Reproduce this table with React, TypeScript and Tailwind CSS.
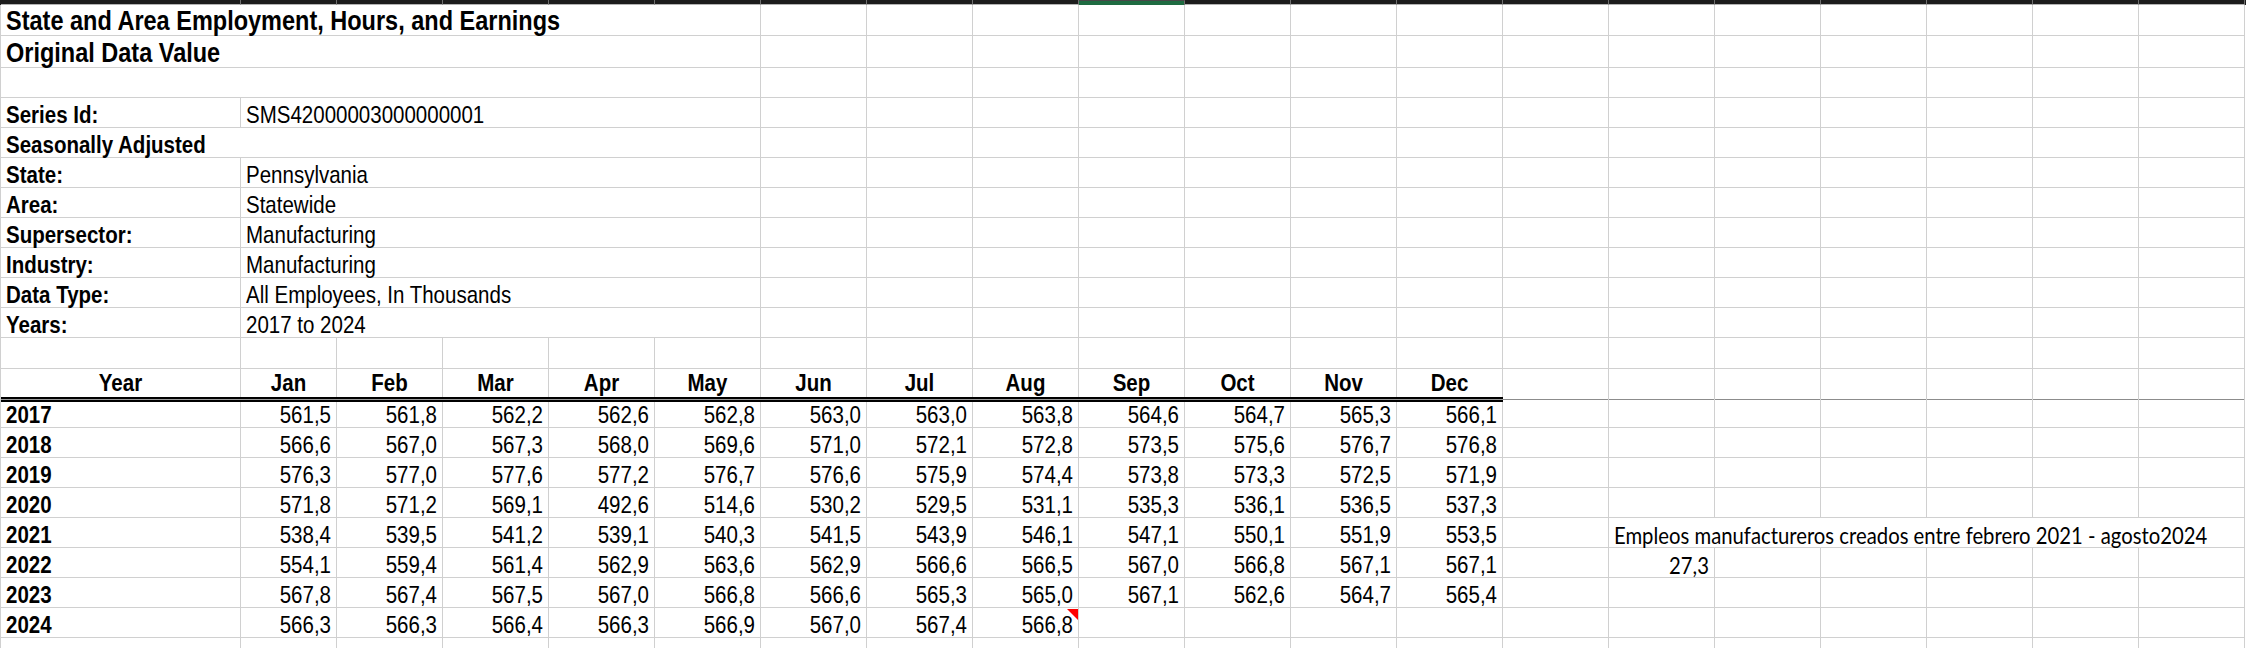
import React from 'react';

const GRID = 'grid grid-cols-[240px_96px_repeat(18,106px)]';
const IDX = Array.from({ length: 20 }, (_, i) => i);
const MONTHS = ['Jan', 'Feb', 'Mar', 'Apr', 'May', 'Jun', 'Jul', 'Aug', 'Sep', 'Oct', 'Nov', 'Dec'];

const DATA: [string, string[]][] = [
  ['2017', ['561,5', '561,8', '562,2', '562,6', '562,8', '563,0', '563,0', '563,8', '564,6', '564,7', '565,3', '566,1']],
  ['2018', ['566,6', '567,0', '567,3', '568,0', '569,6', '571,0', '572,1', '572,8', '573,5', '575,6', '576,7', '576,8']],
  ['2019', ['576,3', '577,0', '577,6', '577,2', '576,7', '576,6', '575,9', '574,4', '573,8', '573,3', '572,5', '571,9']],
  ['2020', ['571,8', '571,2', '569,1', '492,6', '514,6', '530,2', '529,5', '531,1', '535,3', '536,1', '536,5', '537,3']],
  ['2021', ['538,4', '539,5', '541,2', '539,1', '540,3', '541,5', '543,9', '546,1', '547,1', '550,1', '551,9', '553,5']],
  ['2022', ['554,1', '559,4', '561,4', '562,9', '563,6', '562,9', '566,6', '566,5', '567,0', '566,8', '567,1', '567,1']],
  ['2023', ['567,8', '567,4', '567,5', '567,0', '566,8', '566,6', '565,3', '565,0', '567,1', '562,6', '564,7', '565,4']],
  ['2024', ['566,3', '566,3', '566,4', '566,3', '566,9', '567,0', '567,4', '566,8']],
];

const META: [string, string][] = [
  ['State:', 'Pennsylvania'],
  ['Area:', 'Statewide'],
  ['Supersector:', 'Manufacturing'],
  ['Industry:', 'Manufacturing'],
  ['Data Type:', 'All Employees, In Thousands'],
  ['Years:', '2017 to 2024'],
];

type CellProps = {
  children?: React.ReactNode;
  noRight?: boolean;
  noBottom?: boolean;
  align?: 'left' | 'right' | 'center';
  className?: string;
};

function Cell({ children, noRight, noBottom, align = 'left', className = '' }: CellProps) {
  const a =
    align === 'right' ? 'justify-end pr-[5px]' : align === 'center' ? 'justify-center' : 'justify-start pl-[5px]';
  return (
    <div
      className={`flex min-w-0 items-end whitespace-nowrap border-[#d0d0d0] ${noRight ? '' : 'border-r'} ${
        noBottom ? '' : 'border-b'
      } ${a} ${className}`}
    >
      {children}
    </div>
  );
}

// the sheet capture is a little taller than it is wide, so glyphs get stretched vertically
const T = ({ children, bold }: { children: React.ReactNode; bold?: boolean }) => (
  <span className={`inline-block scale-y-[1.15] text-[20.5px] leading-[24px] ${bold ? 'font-bold' : ''}`}>
    {children}
  </span>
);

const Title = ({ children }: { children: React.ReactNode }) => (
  <span className="inline-block scale-y-[1.15] text-[23.5px] leading-[27px] font-bold">{children}</span>
);

const Note = ({ children }: { children: React.ReactNode }) => (
  <span className="inline-block scale-y-[1.1] font-['Lato',sans-serif] text-[20.3px] leading-[24px]">{children}</span>
);

// rows 1-11: columns A-F carry no inner vertical lines, only A|B on label rows
function TopRow({
  h,
  a,
  b,
  aLine,
}: {
  h: string;
  a?: React.ReactNode;
  b?: React.ReactNode;
  aLine?: boolean;
}) {
  return (
    <div className={`${GRID} ${h}`}>
      {IDX.map((i) => (
        <Cell key={i} noRight={i < 5 && !(i === 0 && aLine)}>
          {i === 0 ? a : i === 1 ? b : null}
        </Cell>
      ))}
    </div>
  );
}

export default function App() {
  return (
    <div className="h-[648px] w-[2246px] overflow-hidden bg-white font-['Liberation_Sans',Arial,sans-serif] text-black">
      {/* cut-off column header strip */}
      <div className={`${GRID} h-[5px] bg-[#1c1c1c] pl-[1px]`}>
        {IDX.map((i) =>
          i === 9 ? (
            <div key={i} className="border-t border-r border-t-[#474747] border-r-[#6e6e6e] bg-[#1e6b41]" />
          ) : (
            <div key={i} className="border-r border-b border-r-[#6e6e6e] border-b-[#b3b3b3]" />
          )
        )}
      </div>

      <div className="border-l border-[#d0d0d0]">
        <TopRow h="h-[31px]" a={<Title>State and Area Employment, Hours, and Earnings</Title>} />
        <TopRow h="h-[32px]" a={<Title>Original Data Value</Title>} />
        <TopRow h="h-[30px]" />
        <TopRow h="h-[30px]" aLine a={<T bold>Series Id:</T>} b={<T>SMS42000003000000001</T>} />
        <TopRow h="h-[30px]" a={<T bold>Seasonally Adjusted</T>} />
        {META.map(([k, v]) => (
          <TopRow key={k} h="h-[30px]" aLine a={<T bold>{k}</T>} b={<T>{v}</T>} />
        ))}

        <div className={`${GRID} h-[31px]`}>
          {IDX.map((i) => (
            <Cell key={i} />
          ))}
        </div>

        {/* header */}
        <div className={`${GRID} h-[28px]`}>
          {IDX.map((i) => (
            <Cell key={i} noBottom align="center" className="pb-[2px]">
              {i === 0 ? <T bold>Year</T> : i <= 12 ? <T bold>{MONTHS[i - 1]}</T> : null}
            </Cell>
          ))}
        </div>

        {/* double rule under header */}
        <div className={`${GRID} h-[5px]`}>
          {IDX.map((i) =>
            i <= 12 ? (
              <div key={i} className="flex flex-col">
                <div className="h-[2px] bg-black" />
                <div className="h-[1px] bg-[#9a9a9a]" />
                <div className="h-[2px] bg-black" />
              </div>
            ) : (
              <div key={i} className="flex flex-col border-r border-[#d0d0d0]">
                <div className="h-[2px]" />
                <div className="h-[1px] bg-[#8c8c8c]" />
              </div>
            )
          )}
        </div>

        {DATA.map(([year, vals], r) => (
          <div key={year} className={`${GRID} ${r === 0 ? 'h-[26px]' : 'h-[30px]'}`}>
            {IDX.map((i) => {
              if (i === 0)
                return (
                  <Cell key={i}>
                    <T bold>{year}</T>
                  </Cell>
                );
              if (i <= 12)
                return (
                  <Cell key={i} align="right" className={year === '2024' && i === 8 ? 'relative' : ''}>
                    <T>{vals[i - 1] ?? ''}</T>
                    {year === '2024' && i === 8 && (
                      <svg className="absolute top-[1px] right-0" width="11" height="11" viewBox="0 0 11 11">
                        <polygon points="0,0 11,0 11,11" fill="#ff0000" />
                      </svg>
                    )}
                  </Cell>
                );
              if (year === '2021' && i >= 14)
                return (
                  <Cell key={i} noRight={i < 19}>
                    {i === 14 && <Note>Empleos manufactureros creados entre febrero 2021 - agosto2024</Note>}
                  </Cell>
                );
              if (year === '2022' && i === 14)
                return (
                  <Cell key={i} align="right">
                    <Note>27,3</Note>
                  </Cell>
                );
              return <Cell key={i} />;
            })}
          </div>
        ))}

        <div className={`${GRID} h-[30px]`}>
          {IDX.map((i) => (
            <Cell key={i} />
          ))}
        </div>
      </div>
    </div>
  );
}
